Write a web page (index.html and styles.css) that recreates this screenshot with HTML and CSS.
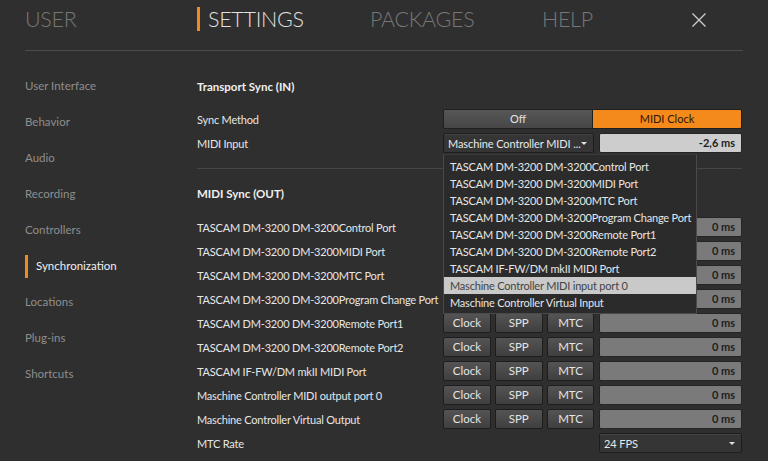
FILE: index.html
```html
<!DOCTYPE html>
<html lang="en">
<head>
<meta charset="utf-8">
<title>Settings - Synchronization</title>
<link rel="stylesheet" href="styles.css">
</head>
<body>
<div class="app">
  <header class="topbar">
    <nav class="tabs">
      <span class="tab">USER</span>
      <span class="tab active">SETTINGS</span>
      <span class="tab">PACKAGES</span>
      <span class="tab">HELP</span>
    </nav>
    <button class="close" aria-label="Close">
      <svg width="16" height="16" viewBox="0 0 16 16"><path d="M1.5 1.5 L14.5 14.5 M14.5 1.5 L1.5 14.5" stroke="#cfcfcf" stroke-width="1.3" fill="none"/></svg>
    </button>
  </header>
  <div class="main">
    <aside class="sidebar">
      <a class="nav-item">User Interface</a>
      <a class="nav-item">Behavior</a>
      <a class="nav-item">Audio</a>
      <a class="nav-item">Recording</a>
      <a class="nav-item">Controllers</a>
      <a class="nav-item active">Synchronization</a>
      <a class="nav-item">Locations</a>
      <a class="nav-item">Plug-ins</a>
      <a class="nav-item">Shortcuts</a>
    </aside>
    <section class="content">
      <h2 class="section-title first">Transport Sync (IN)</h2>
      <div class="row">
        <span class="label">Sync Method</span>
        <div class="segmented">
          <span class="seg">Off</span>
          <span class="seg on">MIDI Clock</span>
        </div>
      </div>
      <div class="row">
        <span class="label">MIDI Input</span>
        <div class="controls">
          <div class="select-wrap">
            <div class="select narrow"><span class="select-text">Maschine Controller MIDI ...</span><span class="caret"></span></div>
            <ul class="menu">
              <li>TASCAM DM-3200 DM-3200Control Port</li>
              <li>TASCAM DM-3200 DM-3200MIDI Port</li>
              <li>TASCAM DM-3200 DM-3200MTC Port</li>
              <li>TASCAM DM-3200 DM-3200Program Change Port</li>
              <li>TASCAM DM-3200 DM-3200Remote Port1</li>
              <li>TASCAM DM-3200 DM-3200Remote Port2</li>
              <li>TASCAM IF-FW/DM mkII MIDI Port</li>
              <li class="hl">Maschine Controller MIDI input port 0</li>
              <li>Maschine Controller Virtual Input</li>
            </ul>
          </div>
          <div class="field light">-2,6 ms</div>
        </div>
      </div>
      <hr class="divider">
      <h2 class="section-title second">MIDI Sync (OUT)</h2>
      <div class="row">
        <span class="label">TASCAM DM-3200 DM-3200Control Port</span>
        <div class="controls"><button class="btn">Clock</button><button class="btn">SPP</button><button class="btn">MTC</button><div class="field">0 ms</div></div>
      </div>
      <div class="row">
        <span class="label">TASCAM DM-3200 DM-3200MIDI Port</span>
        <div class="controls"><button class="btn">Clock</button><button class="btn">SPP</button><button class="btn">MTC</button><div class="field">0 ms</div></div>
      </div>
      <div class="row">
        <span class="label">TASCAM DM-3200 DM-3200MTC Port</span>
        <div class="controls"><button class="btn">Clock</button><button class="btn">SPP</button><button class="btn">MTC</button><div class="field">0 ms</div></div>
      </div>
      <div class="row">
        <span class="label">TASCAM DM-3200 DM-3200Program Change Port</span>
        <div class="controls"><button class="btn">Clock</button><button class="btn">SPP</button><button class="btn">MTC</button><div class="field">0 ms</div></div>
      </div>
      <div class="row">
        <span class="label">TASCAM DM-3200 DM-3200Remote Port1</span>
        <div class="controls"><button class="btn">Clock</button><button class="btn">SPP</button><button class="btn">MTC</button><div class="field">0 ms</div></div>
      </div>
      <div class="row">
        <span class="label">TASCAM DM-3200 DM-3200Remote Port2</span>
        <div class="controls"><button class="btn">Clock</button><button class="btn">SPP</button><button class="btn">MTC</button><div class="field">0 ms</div></div>
      </div>
      <div class="row">
        <span class="label">TASCAM IF-FW/DM mkII MIDI Port</span>
        <div class="controls"><button class="btn">Clock</button><button class="btn">SPP</button><button class="btn">MTC</button><div class="field">0 ms</div></div>
      </div>
      <div class="row">
        <span class="label">Maschine Controller MIDI output port 0</span>
        <div class="controls"><button class="btn">Clock</button><button class="btn">SPP</button><button class="btn">MTC</button><div class="field">0 ms</div></div>
      </div>
      <div class="row">
        <span class="label">Maschine Controller Virtual Output</span>
        <div class="controls"><button class="btn">Clock</button><button class="btn">SPP</button><button class="btn">MTC</button><div class="field">0 ms</div></div>
      </div>
      <div class="row">
        <span class="label">MTC Rate</span>
        <div class="controls"><span class="spacer"></span><div class="select wide"><span class="select-text">24 FPS</span><span class="caret"></span></div></div>
      </div>
    </section>
  </div>
</div>
</body>
</html>
```

FILE: styles.css
```css
* { box-sizing: border-box; }
html, body { margin: 0; padding: 0; }
body {
  background: #2f2f2f;
  font-family: "Lato", "Open Sans", sans-serif;
  color: #e4e4e4;
  width: 768px;
  height: 461px;
  overflow: hidden;
}
.app { width: 768px; height: 461px; }

/* top bar */
.topbar {
  margin: 0 25px;
  height: 51px;
  border-bottom: 1px solid #4b4b4b;
  display: flex;
  align-items: flex-start;
}
.tabs {
  display: grid;
  grid-template-columns: 172px 173px 172px 140px;
  padding-top: 7px;
}
.tab {
  font-size: 21.5px;
  font-weight: 300;
  color: #777;
  line-height: 25px;
  height: 24px;
  letter-spacing: -0.3px;
}
.tab.active {
  color: #e0e0e0;
  border-left: 3px solid #f08a1c;
  padding-left: 8px;
}
.close {
  margin-left: auto;
  margin-right: 36px;
  margin-top: 12px;
  background: none;
  border: 0;
  padding: 0;
  width: 16px;
  height: 16px;
  display: flex;
}

/* layout */
.main { display: flex; }
.sidebar {
  width: 197px;
  padding: 17px 0 0 25px;
  display: flex;
  flex-direction: column;
}
.nav-item {
  height: 36px;
  line-height: 36px;
  font-size: 11.5px;
  color: #8e8e8e;
}
.nav-item.active {
  color: #f0f0f0;
  display: flex;
  align-items: center;
}
.nav-item.active::before {
  content: "";
  width: 3px;
  height: 23px;
  background: #f08a1c;
  margin-right: 8px;
}

.content {
  width: 545px;
  display: flex;
  flex-direction: column;
  gap: 4px;
}
.section-title {
  margin: 0;
  font-size: 11.5px;
  font-weight: 700;
  line-height: 20px;
  color: #f0f0f0;
}
.section-title.first { margin-top: 26px; margin-bottom: 8px; }
.section-title.second { margin-top: 11px; margin-bottom: 9px; }
.divider {
  margin: 11px 0 0 0;
  border: 0;
  border-top: 1px solid #464646;
  height: 0;
}

.row {
  display: flex;
  align-items: center;
  height: 20px;
}
.label {
  width: 246px;
  font-size: 11px;
  letter-spacing: -0.2px;
  color: #e6e6e6;
  white-space: nowrap;
}
.controls {
  display: flex;
  gap: 4px;
  width: 299px;
  height: 20px;
}

/* segmented */
.segmented {
  width: 299px;
  height: 20px;
  display: flex;
  border: 1px solid #1f1f1f;
  border-radius: 2px;
  overflow: hidden;
}
.seg {
  flex: 1;
  text-align: center;
  font-size: 11px;
  line-height: 18px;
  background: linear-gradient(#575757, #464646);
  color: #e2e2e2;
}
.seg.on {
  background: #f58a1c;
  color: #2a1600;
  border-left: 1px solid #1f1f1f;
}

/* select */
.select-wrap { position: relative; width: 151px; }
.select {
  height: 20px;
  border: 1px solid #1d1d1d;
  border-radius: 2px;
  background: #353535;
  display: flex;
  align-items: center;
  padding: 0 4px 0 4px;
  font-size: 11px;
  letter-spacing: -0.1px;
  color: #e8e8e8;
  box-shadow: inset 0 1px 0 #444;
}
.select.narrow { width: 151px; }
.select.wide { width: 143px; margin-left: 1px; }
.select-text { flex: 1; white-space: nowrap; overflow: hidden; }
.caret {
  width: 0; height: 0;
  border-left: 3px solid transparent;
  border-right: 3px solid transparent;
  border-top: 3px solid #e0e0e0;
  margin-right: 2px;
}
.spacer { width: 151px; }

.menu {
  position: absolute;
  left: 0;
  top: 21px;
  width: 254px;
  margin: 0;
  padding: 3px 0 2px;
  list-style: none;
  background: #2b2b2b;
  border: 1px solid #4a4a4a;
  border-top-color: #3a3a3a;
  z-index: 5;
}
.menu li {
  height: 17px;
  line-height: 17px;
  padding-left: 6px;
  font-size: 11px;
  letter-spacing: -0.2px;
  color: #e6e6e6;
  white-space: nowrap;
}
.menu li.hl { background: #c9c9c9; color: #444; }

/* fields */
.field {
  width: 143px;
  height: 20px;
  margin-left: 1px;
  border: 1px solid #252525;
  border-radius: 2px;
  background: #7a7a7a;
  color: #1e1e1e;
  font-size: 11px;
  font-weight: 700;
  text-align: right;
  line-height: 18px;
  padding-right: 6px;
}
.field.light { background: #cdcdcd; margin-left: 0; width: 143px; }
.row .controls .select-wrap + .field { margin-left: 1px; }

.btn {
  width: 48px;
  height: 20px;
  padding: 0;
  border: 1px solid #1e1e1e;
  border-radius: 2px;
  background: linear-gradient(#545454, #3f3f3f);
  color: #e4e4e4;
  font-family: inherit;
  font-size: 11.5px;
  line-height: 18px;
}
```
